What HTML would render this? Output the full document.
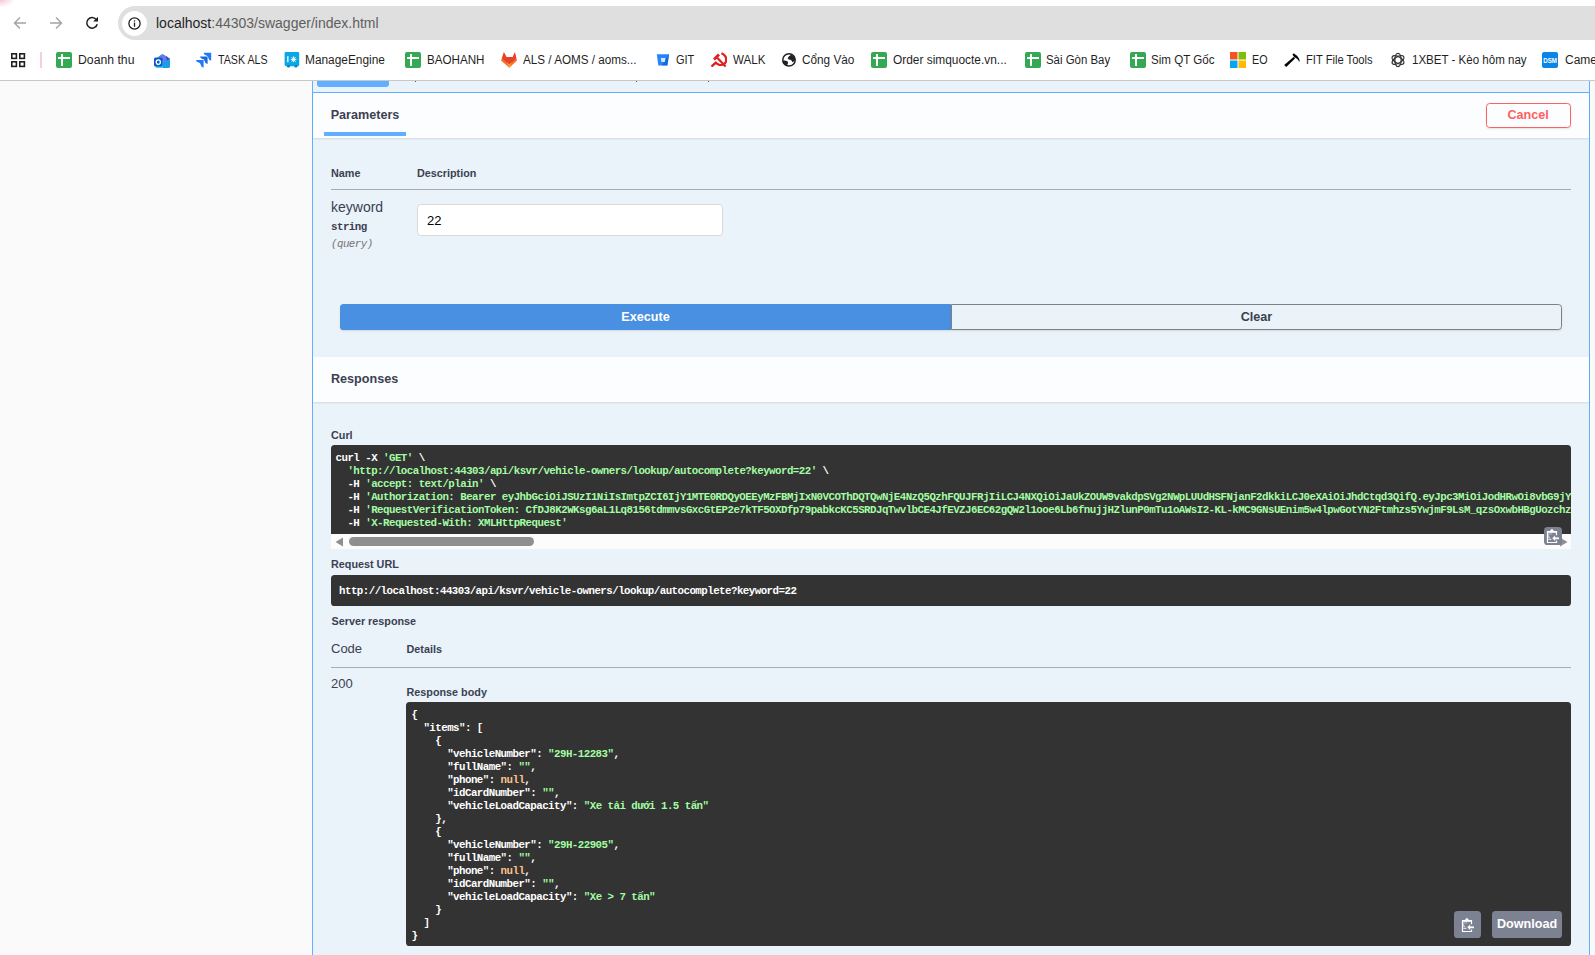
<!DOCTYPE html>
<html><head><meta charset="utf-8">
<style>
*{box-sizing:border-box;margin:0;padding:0}
html,body{width:1595px;height:955px;overflow:hidden;background:#fafafa;font-family:"Liberation Sans",sans-serif;color:#3b4151}
.a{position:absolute}
.t{position:absolute;white-space:pre;line-height:1}
.b{font-weight:bold}
.m{font-family:"Liberation Mono",monospace}
/* chrome */
#top{position:absolute;z-index:5;left:0;top:0;width:1595px;height:81px;background:#fff;border-bottom:1px solid #c9c9c9}
#pill{position:absolute;left:118px;top:6px;width:1500px;height:34px;border-radius:17px;background:#dfdfdf}
#info{position:absolute;left:122px;top:11px;width:25px;height:25px;border-radius:50%;background:#fff}
.bm{position:absolute;transform-origin:0 0;top:54px;font-size:12px;color:#1f1f1f;line-height:12px;white-space:pre}
.ic{position:absolute;top:52px;width:16px;height:16px}
/* swagger */
#op{position:absolute;left:312px;top:40px;width:1278px;height:1000px;border:1px solid #61affe;background:rgba(97,175,254,.1)}
.sh{position:absolute;left:313px;width:1276px;height:45px;background:rgba(255,255,255,.8);box-shadow:0 1px 2px rgba(0,0,0,.1)}
.pre{position:absolute;background:#333;border-radius:3.6px;overflow:hidden}
.code{position:absolute;font-family:"Liberation Mono",monospace;font-weight:bold;font-size:10.8px;line-height:13px;letter-spacing:-0.54px;white-space:pre;color:#fff}
.g{color:#a2fca2}
.o{color:#fcc28c}
.btnc{position:absolute;background:#7d8293;border-radius:3.6px}
</style></head>
<body>
<div id="top">
  <div class="a" style="left:0;top:0;width:14px;height:7px;background:radial-gradient(ellipse at 0 0,rgba(240,180,210,.75) 0,rgba(240,180,210,.35) 40%,rgba(255,255,255,0) 75%)"></div>
  <!-- nav icons -->
  <svg class="a" style="left:12px;top:15px" width="16" height="16" viewBox="0 0 16 16"><path d="M14 8H3M8 2.5L2.5 8L8 13.5" fill="none" stroke="#a3a3a3" stroke-width="1.4"/></svg>
  <svg class="a" style="left:48px;top:15px" width="16" height="16" viewBox="0 0 16 16"><path d="M2 8H13M8 2.5L13.5 8L8 13.5" fill="none" stroke="#a3a3a3" stroke-width="1.4"/></svg>
  <svg class="a" style="left:84px;top:15px" width="16" height="16" viewBox="0 0 16 16"><path d="M13.2 9.2A5.3 5.3 0 1 1 12.3 4.6" fill="none" stroke="#1f1f1f" stroke-width="1.5"/><path d="M14 1.8V6.6H9.2Z" fill="#1f1f1f"/></svg>
  <div id="pill"></div>
  <div id="info"></div>
  <svg class="a" style="left:128px;top:17px" width="13" height="13" viewBox="0 0 13 13"><circle cx="6.5" cy="6.5" r="5.6" fill="none" stroke="#1f1f1f" stroke-width="1.3"/><rect x="5.85" y="5.6" width="1.3" height="4.2" fill="#1f1f1f"/><rect x="5.85" y="3.3" width="1.3" height="1.3" fill="#1f1f1f"/></svg>
  <div class="t" style="left:156px;top:16px;font-size:14px;color:#1f1f1f">localhost<span style="color:#5e5e5e">:44303/swagger/index.html</span></div>

  <!-- bookmarks -->
  <svg class="a" style="left:11px;top:52px" width="16" height="16" viewBox="0 0 16 16"><g fill="none" stroke="#1f1f1f" stroke-width="1.6"><rect x="0.8" y="1.8" width="4.6" height="4.6"/><rect x="8.8" y="1.8" width="4.6" height="4.6"/><rect x="0.8" y="9.8" width="4.6" height="4.6"/><rect x="8.8" y="9.8" width="4.6" height="4.6"/></g></svg>
  <div class="a" style="left:40px;top:52px;width:2px;height:16px;background:#f4cfe2"></div>
  <svg class="ic" style="left:56px" viewBox="0 0 16 16"><rect width="16" height="16" rx="2" fill="#34a853"/><rect x="5" y="2" width="2" height="12" fill="#fff"/><rect x="2" y="5" width="12" height="2" fill="#fff"/></svg>
  <div class="bm" style="left:78.0px;transform:scaleX(1.019)">Doanh thu</div>
  <svg class="ic" style="left:154px" viewBox="0 0 16 16"><path d="M1 7L7.6 2.6Q8.5 2 9.4 2.6L16 7V14.3Q16 16 14.3 16H3Q1.5 16 1.5 14.5Z" fill="#3ccbf4"/><path d="M4.5 5L7.6 2.6Q8.5 2 9.4 2.6L16 7L10.5 10.5Z" fill="#6a78e8"/><path d="M12 3.8L16 7L13 9Z" fill="#3a2fc0" opacity=".8"/><path d="M9 10L16 7V14.3Q16 16 14.3 16H9Z" fill="#1c9ce8"/><rect x="0" y="5.6" width="8.6" height="9" rx="1.6" fill="#0b5ac6"/><ellipse cx="4.3" cy="10.1" rx="2.1" ry="2.3" fill="none" stroke="#fff" stroke-width="1.3"/></svg>
  <svg class="ic" style="left:196px" viewBox="0 0 16 16"><g fill="#1d7afc"><path d="M7.6 0.8H15.2V8.4Q12.6 8.2 12.2 5.4Q12 3.6 10.2 3.4Q8 3.2 7.6 0.8Z"/><path d="M4 4.4H11.6V12Q9 11.8 8.6 9Q8.4 7.2 6.6 7Q4.4 6.8 4 4.4Z" fill="#1868db"/><path d="M0 8H7.6V15.6Q5 15.4 4.6 12.6Q4.4 10.8 2.6 10.6Q0.4 10.4 0 8Z"/></g></svg>
  <div class="bm" style="left:218.2px;transform:scaleX(0.889)">TASK ALS</div>
  <svg class="ic" style="left:284px" viewBox="0 0 16 16"><rect x="0.6" y="0" width="14.6" height="14.2" rx="1.4" fill="#0aa6e8"/><rect x="3" y="13" width="3" height="2.6" rx="1" fill="#0784bb"/><rect x="10.4" y="13" width="3" height="2.6" rx="1" fill="#0784bb"/><rect x="3.2" y="4.2" width="1.3" height="6" fill="#fff"/><path d="M9.6 4.4V10.2M6.8 7.4H12.4M7.7 5.2L11.5 9.6M11.5 5.2L7.7 9.6" stroke="#fff" stroke-width="1"/></svg>
  <div class="bm" style="left:305.3px;transform:scaleX(0.99)">ManageEngine</div>
  <svg class="ic" style="left:405px" viewBox="0 0 16 16"><rect width="16" height="16" rx="2" fill="#34a853"/><rect x="5" y="2" width="2" height="12" fill="#fff"/><rect x="2" y="5" width="12" height="2" fill="#fff"/></svg>
  <div class="bm" style="left:427.1px;transform:scaleX(0.969)">BAOHANH</div>
  <svg class="ic" style="left:501px" viewBox="0 0 16 16"><path d="M2.9 0.3L5.4 4.9H11.8L13.9 0.3L16 8.5L8.3 15.8L0 8.5Z" fill="#fc6d26"/><path d="M2.9 0.3L5.4 4.9H11.8L13.9 0.3L15.2 6.5L8.3 12.6L1 6.5Z" fill="#e24329"/><path d="M5.9 10.5L8.3 12.6L10.7 10.5L8.3 15.8Z" fill="#fca326"/></svg>
  <div class="bm" style="left:523.0px;transform:scaleX(0.973)">ALS / AOMS / aoms...</div>
  <svg class="ic" style="left:655px" viewBox="0 0 16 16"><path d="M1.8 2.3H14.1L12.4 13.5H3.3Z" fill="#2684ff"/><path d="M10 8L14.1 2.3L12.4 13.5H7Z" fill="#0052cc" opacity=".55"/><path d="M5.8 6H10.5L9.8 10H6.5Z" fill="#dbe9ff"/></svg>
  <div class="bm" style="left:676.3px;transform:scaleX(0.916)">GIT</div>
  <svg class="ic" style="left:711px" viewBox="0 0 16 16"><g fill="none" stroke="#e02020"><path d="M10.4 1.2Q16.2 3.6 15 9.6Q13.4 13.8 8 12.8L4.6 11" stroke-width="2.2"/><path d="M4.8 10.6L1.2 13.8" stroke-width="2.4" stroke-linecap="round"/><path d="M6.2 5.8L14.6 14.4" stroke-width="2.2"/><path d="M3 7.4L8 2.6" stroke-width="2.8"/></g></svg>
  <div class="bm" style="left:733.0px;transform:scaleX(0.964)">WALK</div>
  <svg class="ic" style="left:781px" viewBox="0 0 16 16"><circle cx="8" cy="7.9" r="6.2" fill="#fff" stroke="#202124" stroke-width="1.5"/><path d="M6.6 6.2Q7.6 4 10.2 2.8Q14 3.8 14.4 7.6Q13.4 10 11.4 10.2Q10.6 8.2 9.4 7.8Q7.4 7.8 6.6 6.2Z" fill="#202124"/><path d="M1.6 8.8Q4.4 8 6.6 9.4Q7.6 10.4 6.8 11.8Q6.2 12.8 6.4 14.2Q3 13.6 1.6 10.2Z" fill="#202124"/></svg>
  <div class="bm" style="left:802.1px;transform:scaleX(0.981)">Cổng Vào</div>
  <svg class="ic" style="left:871px" viewBox="0 0 16 16"><rect width="16" height="16" rx="2" fill="#34a853"/><rect x="5" y="2" width="2" height="12" fill="#fff"/><rect x="2" y="5" width="12" height="2" fill="#fff"/></svg>
  <div class="bm" style="left:892.5px;transform:scaleX(0.992)">Order simquocte.vn...</div>
  <svg class="ic" style="left:1025px" viewBox="0 0 16 16"><rect width="16" height="16" rx="2" fill="#34a853"/><rect x="5" y="2" width="2" height="12" fill="#fff"/><rect x="2" y="5" width="12" height="2" fill="#fff"/></svg>
  <div class="bm" style="left:1046.2px;transform:scaleX(0.952)">Sài Gòn Bay</div>
  <svg class="ic" style="left:1130px" viewBox="0 0 16 16"><rect width="16" height="16" rx="2" fill="#34a853"/><rect x="5" y="2" width="2" height="12" fill="#fff"/><rect x="2" y="5" width="12" height="2" fill="#fff"/></svg>
  <div class="bm" style="left:1150.9px;transform:scaleX(0.967)">Sim QT Gốc</div>
  <svg class="ic" style="left:1230px" viewBox="0 0 16 16"><rect x="0" y="0" width="7.5" height="7.5" fill="#f35325"/><rect x="8.5" y="0" width="7.5" height="7.5" fill="#81bc06"/><rect x="0" y="8.5" width="7.5" height="7.5" fill="#05a6f0"/><rect x="8.5" y="8.5" width="7.5" height="7.5" fill="#ffba08"/></svg>
  <div class="bm" style="left:1251.5px;transform:scaleX(0.894)">EO</div>
  <svg class="ic" style="left:1284px" viewBox="0 0 16 16"><path d="M0.2 13.1L2.2 15.1L11 6.4L9.6 5Z" fill="#000"/><path d="M8.4 2.6L9.9 1.3L11.2 2.5Q14.6 3.9 15.8 9.3L15.1 9.5Q13.6 6.3 11.4 5.8L10.4 5.6Z" fill="#000"/></svg>
  <div class="bm" style="left:1306.2px;transform:scaleX(0.931)">FIT File Tools</div>
  <svg class="ic" style="left:1390px" viewBox="0 0 16 16"><g fill="none" stroke="#333" stroke-width="1.3"><ellipse cx="8" cy="8" rx="3.2" ry="6.6"/><ellipse cx="8" cy="8" rx="3.2" ry="6.6" transform="rotate(60 8 8)"/><ellipse cx="8" cy="8" rx="3.2" ry="6.6" transform="rotate(120 8 8)"/></g><circle cx="8" cy="8" r="1.6" fill="#fff"/></svg>
  <div class="bm" style="left:1411.5px;transform:scaleX(0.962)">1XBET - Kèo hôm nay</div>
  <svg class="ic" style="left:1542px" viewBox="0 0 16 16"><rect width="16" height="16" rx="2" fill="#0a84e6"/><text x="1.2" y="10.6" font-family="Liberation Sans" font-weight="bold" font-size="6.6" fill="#fff" textLength="13.8" lengthAdjust="spacingAndGlyphs">DSM</text></svg>
  <div class="bm" style="left:1565px">Camera</div>
</div>
<div id="op"></div>
<!-- summary -->
<div class="a" style="left:317px;top:60px;width:72px;height:27px;background:#61affe;border-radius:3px"></div>
<div class="a" style="left:415px;top:81px;width:1px;height:1px;background:#555"></div>
<div class="a" style="left:636px;top:81px;width:1px;height:1px;background:#555"></div>
<div class="a" style="left:708px;top:81px;width:1px;height:1px;background:#555"></div>
<div class="a" style="left:313px;top:92px;width:1276px;height:1px;background:#61affe"></div>
<!-- parameters header -->
<div class="sh" style="top:93px"></div>
<div class="t b" style="left:330.7px;top:109.3px;font-size:12.6px">Parameters</div>
<div class="a" style="left:324px;top:132px;width:82px;height:4px;background:#61affe"></div>
<div class="a" style="left:1486px;top:103px;width:85px;height:25px;border:1px solid #ff6060;border-radius:3.6px;box-shadow:0 1px 2px rgba(0,0,0,.1)"></div>
<div class="t b" style="left:1507.5px;top:109.3px;font-size:12.6px;color:#ff6060">Cancel</div>
<!-- params table -->
<div class="t b" style="left:331px;top:167.9px;font-size:10.8px">Name</div>
<div class="t b" style="left:417px;top:167.9px;font-size:10.8px">Description</div>
<div class="a" style="left:331px;top:189px;width:1240px;height:1px;background:#a7acb5"></div>
<div class="t" style="left:331px;top:200.3px;font-size:14px">keyword</div>
<div class="code" style="left:331px;top:221px;color:#3b4151">string</div>
<div class="code" style="left:331px;top:238px;color:#737373;font-style:italic;font-weight:normal">(query)</div>
<div class="a" style="left:417px;top:204px;width:306px;height:32px;background:#fff;border:1px solid #d9d9d9;border-radius:3.6px"></div>
<div class="t" style="left:427px;top:213.6px;font-size:13px;color:#000">22</div>
<!-- execute -->
<div class="a" style="left:340px;top:304px;width:611px;height:26px;background:#4990e2;border-radius:3.6px 0 0 3.6px;box-shadow:0 1px 2px rgba(0,0,0,.1)"></div>
<div class="t b" style="left:340px;top:311.3px;width:611px;text-align:center;font-size:12.6px;color:#fff">Execute</div>
<div class="a" style="left:951px;top:304px;width:611px;height:26px;border:1px solid #808080;border-radius:0 3.6px 3.6px 0;box-shadow:0 1px 2px rgba(0,0,0,.1)"></div>
<div class="t b" style="left:951px;top:311.3px;width:611px;text-align:center;font-size:12.6px">Clear</div>
<!-- responses header -->
<div class="sh" style="top:357px"></div>
<div class="t b" style="left:331px;top:373.3px;font-size:12.6px">Responses</div>
<!-- curl -->
<div class="t b" style="left:331px;top:429.7px;font-size:10.8px">Curl</div>
<div class="a" style="left:331px;top:534px;width:1240px;height:15px;background:#fcfcfc"></div>
<div class="pre" style="left:331px;top:445px;width:1240px;height:89px;border-radius:3.6px 3.6px 0 0"><div class="code" style="left:4.5px;top:6.6px">curl -X <span class="g">'GET'</span> \
  <span class="g">'http://localhost:44303/api/ksvr/vehicle-owners/lookup/autocomplete?keyword=22'</span> \
  -H <span class="g">'accept: text/plain'</span> \
  -H <span class="g">'Authorization: Bearer eyJhbGciOiJSUzI1NiIsImtpZCI6IjY1MTE0RDQyOEEyMzFBMjIxN0VCOThDQTQwNjE4NzQ5QzhFQUJFRjIiLCJ4NXQiOiJaUkZOUW9vakdpSVg2NWpLUUdHSFNjanF2dkkiLCJ0eXAiOiJhdCtqd3QifQ.eyJpc3MiOiJodHRwOi8vbG9jYWxob3N0OjQ0MzAzIiwibmJmIjoxNzI'</span>
  -H <span class="g">'RequestVerificationToken: CfDJ8K2WKsg6aL1Lq8156tdmmvsGxcGtEP2e7kTF5OXDfp79pabkcKC5SRDJqTwvlbCE4JfEVZJ6EC62gQW2l1ooe6Lb6fnujjHZlunP0mTu1oAWsI2-KL-kMC9GNsUEnim5w4lpwGotYN2Ftmhzs5YwjmF9LsM_qzsOxwbHBgUozchzx'</span> \
  -H <span class="g">'X-Requested-With: XMLHttpRequest'</span></div></div>
<svg class="a" style="left:335px;top:537px" width="9" height="10" viewBox="0 0 9 10"><path d="M8 0.5V9.5L0.5 5Z" fill="#8f8f8f"/></svg>
<div class="a" style="left:349px;top:537px;width:185px;height:9px;border-radius:4.5px;background:#8f8f8f"></div>
<svg class="a" style="left:1559px;top:537px" width="9" height="10" viewBox="0 0 9 10"><path d="M1 0.5V9.5L8.5 5Z" fill="#8f8f8f"/></svg>
<div class="btnc" style="left:1544px;top:527px;width:18px;height:18px"></div>
<svg class="a" style="left:1546.2px;top:528px" width="15" height="16" viewBox="0 0 15 16"><path d="M1.5 3.5H10.5V14.5H1.5Z" fill="none" stroke="#fff" stroke-width="1.2"/><rect x="1.2" y="3" width="9.6" height="1.8" fill="#fff"/><path d="M2.8 4L5.9 0.8L9 4Z" fill="#fff"/><path d="M2.6 5.9H6.2M2.6 5.9V9" stroke="#fff" stroke-opacity=".45" stroke-width="1"/><rect x="2.4" y="8.8" width="1.5" height="0.9" fill="#fff"/><rect x="2.4" y="10.8" width="3" height="0.9" fill="#fff"/><rect x="6" y="7.2" width="6" height="5.4" fill="#7d8293"/><path d="M6.3 10.3L9.1 7.5V13.1Z" fill="#fff"/><rect x="8.6" y="9.4" width="4.4" height="1.8" fill="#fff"/></svg>
<!-- request url -->
<div class="t b" style="left:331px;top:558.9px;font-size:10.8px">Request URL</div>
<div class="pre" style="left:331px;top:575px;width:1240px;height:31px"></div>
<div class="code" style="left:339px;top:585.3px">http://localhost:44303/api/ksvr/vehicle-owners/lookup/autocomplete?keyword=22</div>
<!-- server response -->
<div class="t b" style="left:331.5px;top:615.9px;font-size:10.8px">Server response</div>
<div class="t" style="left:331px;top:642px;font-size:13px">Code</div>
<div class="t b" style="left:406.5px;top:643.6px;font-size:10.8px">Details</div>
<div class="a" style="left:331px;top:667px;width:1240px;height:1px;background:#a7acb5"></div>
<div class="t" style="left:331px;top:677px;font-size:13px">200</div>
<div class="t b" style="left:406.5px;top:686.7px;font-size:10.8px">Response body</div>
<div class="pre" style="left:406px;top:702px;width:1165px;height:244px"></div>
<div class="code" style="left:411.5px;top:709.3px">{
  "items": [
    {
      "vehicleNumber": <span class="g">"29H-12283"</span>,
      "fullName": <span class="g">""</span>,
      "phone": <span class="o">null</span>,
      "idCardNumber": <span class="g">""</span>,
      "vehicleLoadCapacity": <span class="g">"Xe tải dưới 1.5 tấn"</span>
    },
    {
      "vehicleNumber": <span class="g">"29H-22905"</span>,
      "fullName": <span class="g">""</span>,
      "phone": <span class="o">null</span>,
      "idCardNumber": <span class="g">""</span>,
      "vehicleLoadCapacity": <span class="g">"Xe &gt; 7 tấn"</span>
    }
  ]
}</div>
<div class="btnc" style="left:1454px;top:911px;width:27px;height:27px"></div>
<svg class="a" style="left:1461px;top:917px" width="15" height="16" viewBox="0 0 15 16"><path d="M1.5 3.5H10.5V14.5H1.5Z" fill="none" stroke="#fff" stroke-width="1.2"/><rect x="1.2" y="3" width="9.6" height="1.8" fill="#fff"/><path d="M2.8 4L5.9 0.8L9 4Z" fill="#fff"/><path d="M2.6 5.9H6.2M2.6 5.9V9" stroke="#fff" stroke-opacity=".45" stroke-width="1"/><rect x="2.4" y="8.8" width="1.5" height="0.9" fill="#fff"/><rect x="2.4" y="10.8" width="3" height="0.9" fill="#fff"/><rect x="6" y="7.2" width="6" height="5.4" fill="#7d8293"/><path d="M6.3 10.3L9.1 7.5V13.1Z" fill="#fff"/><rect x="8.6" y="9.4" width="4.4" height="1.8" fill="#fff"/></svg>
<div class="btnc" style="left:1492px;top:911px;width:70px;height:27px"></div>
<div class="t b" style="left:1497px;top:918px;font-size:12.6px;color:#fff">Download</div>
</body></html>
